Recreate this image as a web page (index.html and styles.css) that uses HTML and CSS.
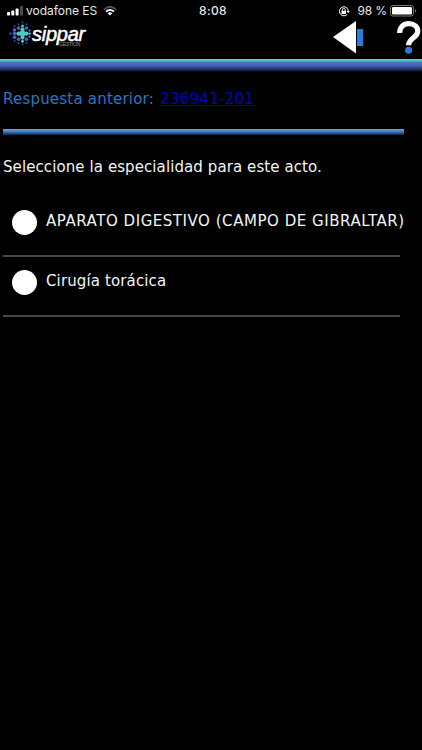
FILE: index.html
```
<!DOCTYPE html>
<html lang="es">
<head>
<meta charset="utf-8">
<meta name="viewport" content="width=device-width, initial-scale=1">
<title>Sippar Gestion</title>
<link rel="stylesheet" href="styles.css">
</head>
<body>
<div class="status">
  <div class="status-left">
    <svg class="signal" width="17" height="10" viewBox="0 0 17 10"><g fill="#fff"><rect x="0" y="6" width="3" height="3.5" rx=".7"/><rect x="4.3" y="4.5" width="3" height="5" rx=".7"/><rect x="8.6" y="2.5" width="3" height="7" rx=".7"/></g><rect x="13" y="0" width="3" height="9.5" rx=".7" fill="#4b4b4d"/></svg>
    <span class="carrier">vodafone ES</span>
    <svg class="wifi" width="14" height="10" viewBox="0 0 14 10" fill="none"><path d="M.9 3.6Q7-2 13.1 3.6" stroke="#555" stroke-width="1.7"/><path d="M3 5.7Q7 2.1 11 5.7" stroke="#fff" stroke-width="1.8"/><path d="M4.7 7.2Q7 5.3 9.3 7.2L7 9.6Z" fill="#fff"/></svg>
  </div>
  <span class="clock">8:08</span>
  <div class="status-right">
    <svg width="12" height="11" viewBox="0 0 12 11" fill="none" stroke="#fff"><path d="M9.2 2.2A4.5 4.5 0 1 0 9.2 8.4M9.2 2.2Q10.4 3.5 10.2 5.6"/><path d="M8.4 4.9h3.4L10.1 7z" fill="#fff" stroke="none"/><rect x="3.5" y="4.8" width="4.5" height="3.3" fill="#fff" stroke="none"/><path d="M4.4 5V3.8a1.4 1.4 0 0 1 2.8 0V5" stroke-width=".9"/></svg>
    <span class="percent">98 %</span>
    <svg width="27" height="12" viewBox="0 0 27 12"><rect x=".5" y=".5" width="23" height="10.5" rx="2.4" fill="none" stroke="#777"/><rect x="2" y="2" width="20" height="7.5" rx="1.2" fill="#fff"/><path d="M25 4q1.3.5 1.3 1.8T25 7.6z" fill="#777"/></svg>
  </div>
</div>
<header class="bar">
  <div class="logo">
    <svg width="22" height="26" viewBox="0 0 22 26">
      <g fill="#2f4fa8"><circle cx="13.5" cy="1.4" r="1"/><circle cx="13.5" cy="23.6" r="1"/><circle cx="1.5" cy="12.5" r="1.3"/><circle cx="5.5" cy="5.2" r="1"/><circle cx="5.5" cy="20" r="1"/><circle cx="9.5" cy="3.2" r="1"/><circle cx="9.5" cy="22" r="1"/><circle cx="17.5" cy="3.2" r="1"/><circle cx="17.5" cy="22" r="1"/></g>
      <g fill="#4769c9"><circle cx="5.5" cy="9" r="1.8"/><circle cx="5.5" cy="12.6" r="1.8"/><circle cx="5.5" cy="16.3" r="1.8"/><circle cx="9.5" cy="7" r="1.8"/><circle cx="9.5" cy="18.3" r="1.8"/><circle cx="17.5" cy="7" r="1.8"/><circle cx="17.5" cy="18.3" r="1.8"/><circle cx="20.6" cy="9.5" r="1.2"/><circle cx="20.6" cy="15.8" r="1.2"/></g>
      <g fill="#4fc9be"><circle cx="13.5" cy="5" r="1.5"/><circle cx="13.5" cy="8.6" r="2.1"/><circle cx="13.5" cy="12.6" r="3"/><circle cx="13.5" cy="16.6" r="2.1"/><circle cx="13.5" cy="20.3" r="1.5"/><circle cx="9.5" cy="12.6" r="2.2"/><circle cx="17.5" cy="12.6" r="2.2"/><circle cx="20.8" cy="12.6" r="1.2"/></g>
    </svg>
    <div class="brand"><span class="brand-name">sippar</span><span class="brand-sub">GESTION</span></div>
  </div>
  <div class="actions">
    <svg width="30" height="33" viewBox="0 0 30 33"><path d="M0 16L23 0V32.5Z" fill="#fff"/><rect x="24" y="8" width="6" height="17" fill="#2b7bd8"/></svg>
    <svg width="25" height="33" viewBox="0 0 25 33"><path d="M2.6 12C2.8 5.9 6.6 2.6 11.6 2.6c5.4 0 9.2 3 9.2 7.6 0 6.5-9 6.6-9.2 14" fill="none" stroke="#fff" stroke-width="5.2"/><circle cx="11.6" cy="29.2" r="3.5" fill="#2b7bd8"/></svg>
  </div>
</header>
<div class="strip"></div>
<main class="content">
  <p class="previous"><span class="previous-label">Respuesta anterior:</span> <a href="#">236941-201</a></p>
  <div class="divider"></div>
  <p class="prompt">Seleccione la especialidad para este acto.</p>
  <div class="option"><span class="radio"></span><span class="label-a">APARATO DIGESTIVO (CAMPO DE GIBRALTAR)</span></div>
  <div class="option"><span class="radio"></span><span class="label-b">Cirugía torácica</span></div>
</main>
</body>
</html>
```
FILE: styles.css
```
* { box-sizing: border-box; }
body { margin: 0; height: 750px; overflow: hidden; background: #000; color: #f4f4f4; font-family: Verdana, "DejaVu Sans", sans-serif; font-size: 15px; }
svg { display: block; flex: none; }
p { margin: 0; white-space: nowrap; }
.status { height: 21px; display: grid; grid-template-columns: 1fr auto 1fr; align-items: center; padding: 1px 5px 0 7px; font: 12px/20px Inter, sans-serif; color: #e8e8e8; white-space: nowrap; }
.status-left, .status-right { display: flex; align-items: center; }
.status-right { justify-content: flex-end; }
.carrier { margin-left: 2px; letter-spacing: -.02px; }
.wifi { margin-left: 6px; }
.clock { position: relative; left: 1px; font-weight: 500; letter-spacing: .4px; }
.percent { margin: 0 3px 0 7px; letter-spacing: -.1px; }
.bar { height: 38px; display: flex; justify-content: space-between; padding-left: 9px; }
.logo { display: flex; }
.brand { position: relative; margin-left: 1px; font-family: "Liberation Sans", sans-serif; font-style: italic; }
.brand-name { display: block; padding-top: 1px; font-size: 20px; line-height: 24px; letter-spacing: -.25px; color: #fff; -webkit-text-stroke: .5px #fff; }
.brand-sub { position: absolute; left: 27px; top: 20px; font-size: 5px; line-height: 6px; letter-spacing: -.2px; font-style: normal; color: #999; }
.actions { display: flex; gap: 34px; }
.strip { height: 13px; background: linear-gradient(#56c5bd 0 2px, #4e78c4 3px, #426abd 6px, #2b437e 9px, #111a36 12px, #000); }
.content { padding: 17px 0 0 3px; }
.previous { line-height: 20px; letter-spacing: .21px; color: #2d76c4; }
.previous a { margin-left: 1px; letter-spacing: .3px; color: #0000c4; }
.divider { width: 401px; height: 6px; margin-top: 20px; background: linear-gradient(#64add0, #4176b9 45%, #25457c 80%, #091225); }
.prompt { margin-top: 22px; line-height: 20px; letter-spacing: .09px; }
.option { width: 397px; height: 60px; display: flex; align-items: flex-start; padding: 13px 0 0 9px; border-bottom: 2px solid #484848; line-height: 20px; white-space: nowrap; }
.option span + span { padding-top: 1px; }
.prompt + .option { margin-top: 20px; }
.radio { flex: none; width: 25px; height: 25px; margin: 0 9px 0 0; border-radius: 50%; background: #fff; }
.label-a { letter-spacing: .54px; }
.label-b { letter-spacing: .13px; }
```
